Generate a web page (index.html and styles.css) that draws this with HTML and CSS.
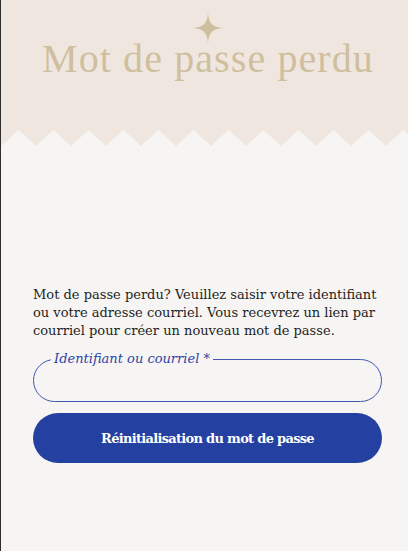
FILE: index.html
```html
<html><head>
  <title>Mot de passe perdu</title>
  <link rel="stylesheet" href="styles.css">
</head>
<body>
  <header class="page-header">
    <svg class="star" width="30" height="30" viewBox="0 0 30 30">
      <path d="M15 0C16 10 19 14 30 15C19 16 16 20 15 30C14 20 11 16 0 15C11 14 14 10 15 0Z" fill="#cfbf9f"/>
    </svg>
    <h1 class="page-title">Mot de passe perdu</h1>
  </header>
  <svg class="zigzag" width="100%" height="16">
    <defs>
      <pattern id="zz" width="35" height="16" patternUnits="userSpaceOnUse">
        <path d="M0 0H35V16L17.5 0L0 16Z" fill="#efe7df"/>
      </pattern>
    </defs>
    <rect width="100%" height="16" fill="url(#zz)"/>
  </svg>

  <main class="content">
    <p class="intro">Mot de passe perdu? Veuillez saisir votre identifiant ou votre adresse courriel. Vous recevrez un lien par courriel pour créer un nouveau mot de passe.</p>

    <form class="lost-form">
      <fieldset class="field">
        <legend>Identifiant ou courriel *</legend>
        <input type="text" name="user_login">
      </fieldset>
      <button type="submit" class="submit-button">Réinitialisation du mot de passe</button>
    </form>
  </main>
</body></html>
```

FILE: styles.css
```css
body {
  margin: 0;
  min-height: 551px;
  background-color: #f6f5f3;
  border-left: 1px solid #2e2e2e;
  font-family: "DejaVu Serif", serif;
  color: #1e1e1e;
}

.page-header {
  height: 130px;
  background-color: #efe7df;
  display: flex;
  flex-direction: column;
  align-items: center;
  padding-top: 13px;
  padding-left: 7px;
  box-sizing: border-box;
}

.star {
  display: block;
}

.page-title {
  margin: -4px 0 0;
  font-family: "Liberation Serif", serif;
  font-weight: normal;
  font-size: 40px;
  line-height: 40px;
  letter-spacing: 1.1px;
  color: #cfbf9f;
}

.zigzag {
  display: block;
}

.content {
  padding: 140px 26px 0 32px;
}

.intro {
  margin: 0;
  font-size: 13px;
  line-height: 18px;
}

.field {
  margin: 11px 0 0;
  padding: 0 17px 0 17px;
  border: 1px solid #4257b2;
  border-radius: 22px;
}

.field legend {
  padding: 0 3px;
  font-style: italic;
  font-size: 13px;
  line-height: 16px;
  color: #2c43a4;
}

.field input {
  display: block;
  width: 100%;
  height: 34px;
  border: none;
  background: transparent;
  outline: none;
  font-family: inherit;
  font-size: 13px;
}

.submit-button {
  display: block;
  width: 100%;
  height: 50px;
  margin-top: 11px;
  border: none;
  border-radius: 25px;
  background-color: #2440a1;
  color: #fff;
  font-family: "DejaVu Serif", serif;
  font-weight: bold;
  font-size: 13px;
  letter-spacing: -0.7px;
  cursor: pointer;
}
```
